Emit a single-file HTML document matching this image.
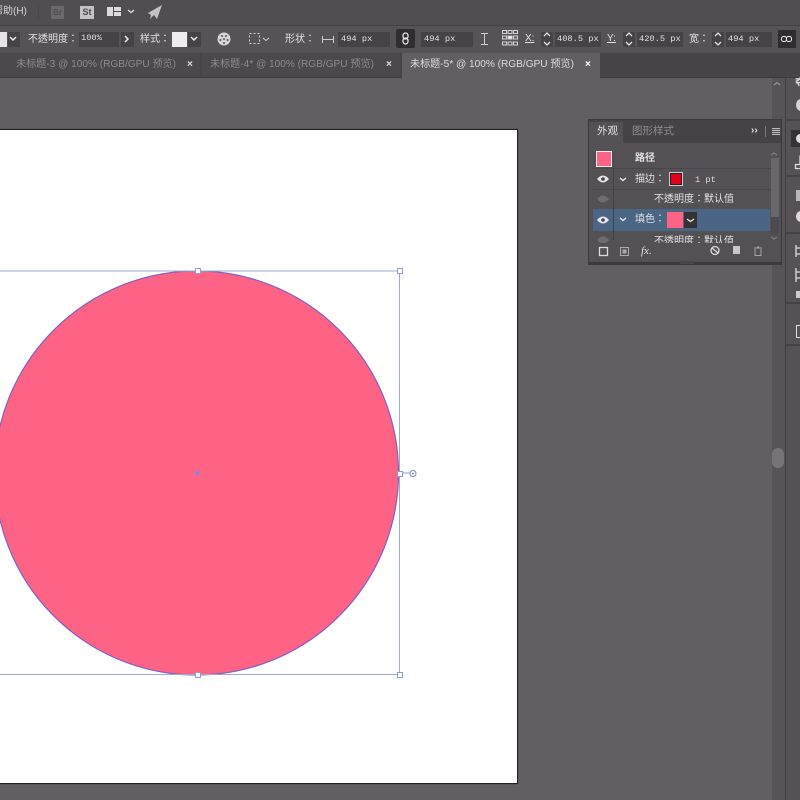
<!DOCTYPE html>
<html><head><meta charset="utf-8"><style>
html,body{margin:0;padding:0}
body{width:800px;height:800px;overflow:hidden;position:relative;background:#625f62;font-family:"Liberation Sans","Noto Sans CJK TC",sans-serif;color:#ddd}
#w{position:absolute;left:0;top:0;width:800px;height:800px;overflow:hidden;background:#625f62;filter:blur(.35px)}
.a{position:absolute}
.t{position:absolute;white-space:nowrap;font-size:10px;line-height:12px;color:#e2e0e2}
.m{font-family:"Liberation Mono","Noto Sans CJK TC",monospace;font-size:8.7px}
.f{position:absolute;background:#464346;height:15px;top:32px}
.s{position:absolute;background:#fff;border:1px solid #8b9fcb;width:4px;height:4px}
svg{position:absolute;overflow:visible}
</style></head><body><div id="w">
<div class="a" style="left:0;top:0;width:800px;height:25px;background:#514e51"></div>
<div class="a" style="left:0;top:25px;width:800px;height:1px;background:#434043"></div>
<div class="a" style="left:0;top:26px;width:800px;height:27px;background:#565356"></div>
<div class="a" style="left:0;top:53px;width:800px;height:24px;background:#474447"></div>
<div class="a" style="left:0;top:77px;width:800px;height:1px;background:#3d3a3d"></div>
<div class="t" style="left:-7px;top:6px;font-size:10px;color:#d8d6d8">帮助(H)</div>
<div class="a" style="left:38px;top:6px;width:1px;height:14px;background:#4a474a"></div>
<div class="a" style="left:51px;top:6px;width:13px;height:13px;background:#6b696b;color:#504d50;font-size:8px;font-weight:bold;line-height:13px;text-align:center">Br</div>
<div class="a" style="left:80px;top:6px;width:14px;height:13px;background:#c4c2c4;color:#4d4a4d;font-size:9px;font-weight:bold;line-height:13px;text-align:center">St</div>
<div class="a" style="left:107px;top:7px;width:6px;height:9px;background:#dcdadc"></div>
<div class="a" style="left:114px;top:7px;width:7px;height:4px;background:#dcdadc"></div>
<div class="a" style="left:114px;top:12px;width:7px;height:4px;background:#dcdadc"></div>
<svg style="left:0;top:0" width="800" height="80" fill="none" stroke="#dcdadc" stroke-width="1.4">
<path d="M128 10l3 2.5 3-2.500"/>
<path d="M148 13L162 5 157 19 154 15 150 19 151 15Z" fill="#c4c2c4" stroke="none"/>
</svg>
<div class="a" style="left:0;top:32px;width:7px;height:15px;background:#e6e4e6"></div>
<div class="a" style="left:8px;top:32px;width:12px;height:15px;background:#474447"></div>
<svg style="left:0;top:0" width="30" height="60" fill="none" stroke="#eee" stroke-width="1.5"><path d="M10 37l3 3 3-3"/></svg>
<div class="t" style="left:28px;top:34px">不透明度：</div>
<div class="f" style="left:79px;width:40px"></div>
<div class="t m" style="left:81px;top:32px">100%</div>
<div class="f" style="left:121px;width:13px"></div>
<svg style="left:0;top:0" width="140" height="60" fill="none" stroke="#eee" stroke-width="1.5"><path d="M125 36l3 3-3 3"/></svg>
<div class="t" style="left:140px;top:34px">样式：</div>
<div class="a" style="left:172px;top:32px;width:15px;height:15px;background:#eeecf0"></div>
<div class="f" style="left:188px;width:13px"></div>
<svg style="left:0;top:0" width="210" height="60" fill="none" stroke="#eee" stroke-width="1.5"><path d="M191 37l3 3 3-3"/></svg>
<svg style="left:217px;top:32px" width="14" height="14"><circle cx="7" cy="7" r="6.500" fill="#d5d3d5"/><circle cx="5" cy="4" r="1" fill="#555"/><circle cx="9" cy="4" r="1" fill="#555"/><circle cx="3.500" cy="8" r="1" fill="#555"/><circle cx="7" cy="7" r="1" fill="#555"/><circle cx="10.500" cy="8" r="1" fill="#555"/><circle cx="7" cy="11" r="1" fill="#555"/></svg>
<svg style="left:249px;top:33px" width="22" height="12" fill="none" stroke="#d5d3d5"><rect x=".5" y=".5" width="10" height="10" stroke-dasharray="2 2"/><path d="M14 5l3 2.500 3-2.500"/></svg>
<div class="t" style="left:285px;top:34px">形状：</div>
<svg style="left:322px;top:36px" width="12" height="7" fill="none" stroke="#ccc"><path d="M.5 0v7M11.500 0v7M1 3.500h10"/></svg>
<div class="f" style="left:338px;width:52px"></div>
<div class="t m" style="left:341px;top:33px">494 px</div>
<div class="a" style="left:396px;top:29px;width:19px;height:19px;background:#2f2d2f;border-radius:2px"></div>
<svg style="left:402px;top:32px" width="8" height="13" fill="none" stroke="#eee" stroke-width="1.200"><rect x="1" y="1" width="5" height="6" rx="2.500"/><rect x="1" y="6" width="5" height="6" rx="2.500"/></svg>
<div class="f" style="left:421px;width:52px"></div>
<div class="t m" style="left:424px;top:33px">494 px</div>
<svg style="left:481px;top:33px" width="7" height="12" fill="none" stroke="#ccc"><path d="M0 .5h7M0 11.500h7M3.500 1v10"/></svg>
<svg style="left:502px;top:30px" width="16" height="16" fill="none" stroke="#d5d3d5"><rect x=".5" y=".5" width="4" height="3"/><rect x="6" y=".5" width="4" height="3"/><rect x="11.500" y=".5" width="4" height="3"/><rect x=".5" y="6" width="4" height="3"/><rect x="6" y="6" width="4" height="3" fill="#eee"/><rect x="11.500" y="6" width="4" height="3"/><rect x=".5" y="12" width="4" height="3"/><rect x="6" y="12" width="4" height="3"/><rect x="11.500" y="12" width="4" height="3"/></svg>
<div class="t" style="left:525px;top:33px;text-decoration:underline">X:</div>
<div class="f" style="left:541px;width:12px"></div>
<div class="f" style="left:555px;width:46px"></div>
<div class="t m" style="left:557px;top:33px">408.5 px</div>
<div class="t" style="left:607px;top:33px;text-decoration:underline">Y:</div>
<div class="f" style="left:623px;width:12px"></div>
<div class="f" style="left:637px;width:46px"></div>
<div class="t m" style="left:639px;top:33px">420.5 px</div>
<div class="t" style="left:689px;top:34px">宽：</div>
<div class="f" style="left:712px;width:12px"></div>
<div class="f" style="left:726px;width:46px"></div>
<div class="t m" style="left:728px;top:33px">494 px</div>
<svg style="left:0;top:0" width="800" height="60" fill="none" stroke="#e4e2e4" stroke-width="1.300"><path d="M544 36l3-3 3 3M544 42l3 3 3-3M626 36l3-3 3 3M626 42l3 3 3-3M715 36l3-3 3 3M715 42l3 3 3-3"/></svg>
<div class="a" style="left:778px;top:30px;width:18px;height:18px;background:#2f2d2f"></div>
<svg style="left:781px;top:36px" width="11" height="6" fill="none" stroke="#eee"><rect x=".5" y=".5" width="5" height="5" rx="2"/><rect x="5.500" y=".5" width="5" height="5" rx="2"/></svg>

<div class="a" style="left:0;top:53px;width:200px;height:24px;background:#4c494c"></div>
<div class="a" style="left:202px;top:53px;width:198px;height:24px;background:#4c494c"></div>
<div class="t" style="left:16px;top:59px;color:#8e8b8e;font-size:10.100px">未标题-3 @ 100% (RGB/GPU 预览)</div>
<div class="t" style="left:187px;top:59px;color:#ddd;font-weight:bold">×</div>
<div class="t" style="left:210px;top:59px;color:#8e8b8e;font-size:10.100px">未标题-4* @ 100% (RGB/GPU 预览)</div>
<div class="t" style="left:386px;top:59px;color:#ddd;font-weight:bold">×</div>
<div class="a" style="left:402px;top:53px;width:198px;height:25px;background:#625f62"></div>
<div class="t" style="left:410px;top:59px;color:#dedcde;font-size:10.100px">未标题-5* @ 100% (RGB/GPU 预览)</div>
<div class="t" style="left:585px;top:59px;color:#fff;font-weight:bold">×</div>

<div class="a" style="left:-2px;top:129px;width:518px;height:653px;background:#fff;border:1px solid #222;box-shadow:0 0 1px #333"></div>
<svg style="left:0;top:0" width="800" height="800">
<circle cx="196.500" cy="473" r="202" fill="#fe6385" stroke="#7e63c2" stroke-width="1.200"/>
<path d="M-2 271H399.500V674.500H-2" fill="none" stroke="#9aadd0" stroke-width="1"/>
<path d="M400 473H410" stroke="#8b9fcb" fill="none"/>
<circle cx="413" cy="473.500" r="3" fill="none" stroke="#7688b0"/><circle cx="413" cy="473.500" r="1" fill="#7688b0"/>
<circle cx="197" cy="473" r="2" fill="#6f8fe0"/>
</svg>
<div class="s" style="left:195px;top:268px"></div>
<div class="s" style="left:397px;top:268px"></div>
<div class="s" style="left:397px;top:471px"></div>
<div class="s" style="left:195px;top:672px"></div>
<div class="s" style="left:397px;top:672px"></div>

<div class="a" style="left:772px;top:78px;width:13px;height:722px;background:#575457"></div>
<svg style="left:0;top:0" width="800" height="100" fill="none"><path d="M774 85l3-2.500 3 2.500" stroke="#a5a3a5"/></svg>
<div class="a" style="left:772px;top:448px;width:12px;height:20px;background:#777477;border-radius:6px"></div>
<div class="a" style="left:785px;top:78px;width:15px;height:722px;background:#555255"></div>
<div class="a" style="left:785px;top:78px;width:1px;height:722px;background:#413e41"></div>
<div class="a" style="left:786px;top:119px;width:14px;height:2px;background:#454245"></div>
<div class="a" style="left:786px;top:175px;width:14px;height:2px;background:#454245"></div>
<div class="a" style="left:786px;top:232px;width:14px;height:2px;background:#454245"></div>
<div class="a" style="left:786px;top:302px;width:14px;height:2px;background:#454245"></div>
<div class="a" style="left:786px;top:344px;width:14px;height:2px;background:#454245"></div>
<div class="t" style="left:795px;top:77px;font-weight:bold;font-size:11px">夺</div>
<div class="a" style="left:796px;top:99px;width:10px;height:12px;background:#d5d3d5;border-radius:50%"></div>
<div class="a" style="left:791px;top:130px;width:9px;height:17px;background:#353235"></div>
<div class="a" style="left:796px;top:134px;width:8px;height:9px;background:#ddd;border-radius:50%"></div>
<svg style="left:795px;top:155px" width="10" height="15" fill="none" stroke="#ddd" stroke-width="1.300"><path d="M5 .5v9M.5 9.500h9v4h-9z"/></svg>
<div class="a" style="left:796px;top:190px;width:6px;height:11px;background:#b8b6b8"></div>
<div class="a" style="left:796px;top:211px;width:10px;height:11px;background:#ddd;border-radius:50%"></div>
<svg style="left:795px;top:244px" width="8" height="54" fill="none" stroke="#ddd" stroke-width="1.300"><path d="M1 1v12M1 4h6M1 10h6M1 24v14M1 28h6M1 34h6"/><rect x="1" y="47" width="6" height="7" fill="#ccc" stroke="none"/></svg>
<div class="a" style="left:796px;top:325px;width:4px;height:11px;border:1px solid #ddd;border-right:0"></div>

<div class="a" style="left:588px;top:119px;width:194px;height:146px;background:#545154;border:1px solid #3c393c;box-sizing:border-box"></div>
<div class="a" style="left:589px;top:120px;width:192px;height:23px;background:#464346"></div>
<div class="a" style="left:589px;top:122px;width:34px;height:21px;background:#545154"></div>
<div class="t" style="left:597px;top:125px;font-size:10.500px">外观</div>
<div class="t" style="left:632px;top:125px;color:#8f8c8f;font-size:10.500px">图形样式</div>
<div class="t" style="left:751px;top:125px;font-weight:bold;font-size:10px">››</div>
<div class="a" style="left:765px;top:126px;width:1px;height:11px;background:#777"></div>
<div class="a" style="left:772px;top:128px;width:8px;height:7px;background:repeating-linear-gradient(#bbb 0,#bbb 1px,#555 1px,#555 2px)"></div>
<div class="a" style="left:596px;top:151px;width:14px;height:14px;background:#fe6385;border:1px solid #eee"></div>
<div class="t" style="left:635px;top:153px;font-size:10px;font-weight:bold">路径</div>
<div class="a" style="left:593px;top:168px;width:178px;height:1px;background:#4a474a"></div>
<div class="a" style="left:593px;top:189px;width:178px;height:1px;background:#4a474a"></div>
<div class="a" style="left:593px;top:209px;width:178px;height:1px;background:#4a474a"></div>
<div class="a" style="left:593px;top:209px;width:177px;height:22px;background:#4b6684"></div>
<div class="a" style="left:613px;top:168px;width:1px;height:72px;background:#444144"></div>
<svg style="left:0;top:0" width="800" height="260" fill="none">
<path d="M597 179q6-7 12 0q-6 7-12 0z" fill="#e4e2e4"/><circle cx="603" cy="179" r="1.800" fill="#444"/>
<path d="M597 199q6-7 12 0q-6 7-12 0z" fill="#6f6c6f"/>
<path d="M597 220q6-7 12 0q-6 7-12 0z" fill="#e8e8ee"/><circle cx="603" cy="220" r="1.800" fill="#446"/>
<path d="M597 240q6-7 12 0q-6 7-12 0z" fill="#6f6c6f"/>
<path d="M620 178l3 2.500 3-2.500M620 218l3 2.500 3-2.500" stroke="#eee" stroke-width="1.300"/>
</svg>
<div class="t" style="left:635px;top:174px">描边：</div>
<div class="a" style="left:670px;top:173px;width:10px;height:10px;background:#e3001b;border:1px solid #222;outline:1px solid #ccc"></div>
<div class="t m" style="left:695px;top:174px">1 pt</div>
<div class="t" style="left:654px;top:194px">不透明度：默认值</div>
<div class="t" style="left:635px;top:214px">填色：</div>
<div class="a" style="left:667px;top:212px;width:16px;height:16px;background:#fe6385"></div>
<div class="a" style="left:684px;top:212px;width:13px;height:16px;background:#353235"></div>
<svg style="left:0;top:0" width="800" height="260" fill="none"><path d="M687 219l3.500 2.500 3.500-2.500" stroke="#eee" stroke-width="1.300"/></svg>
<div class="a" style="left:593px;top:231px;width:178px;height:12px;overflow:hidden"><div class="t" style="left:61px;top:5px">不透明度：默认值</div></div>
<div class="a" style="left:771px;top:158px;width:8px;height:76px;background:#4d4a4d"></div>
<div class="a" style="left:771px;top:158px;width:8px;height:59px;background:#6a676a"></div>
<svg style="left:0;top:0" width="800" height="260" fill="none"><path d="M771 155l3-2 3 2M771 237l3 2 3-2" stroke="#8a878a"/></svg>
<div class="a" style="left:589px;top:243px;width:192px;height:20px;background:#545154"></div>
<div class="a" style="left:589px;top:262px;width:192px;height:2px;background:#3c393c"></div>
<div class="a" style="left:680px;top:261px;width:14px;height:3px;background:#4a474a"></div>
<svg style="left:0;top:0" width="800" height="270" fill="none" stroke="#dcdadc">
<rect x="599.500" y="247.500" width="8" height="8" stroke-width="1.300"/>
<rect x="620.500" y="247.500" width="8" height="8" stroke="#aaa"/><rect x="622.500" y="249.500" width="4" height="4" fill="#aaa" stroke="none"/>
<circle cx="715" cy="250.500" r="4" stroke-width="1.300"/><path d="M712 248l6 5" stroke-width="1.300"/>
<rect x="733" y="246" width="7" height="8" fill="#c8c6c8" stroke="none"/>
<path d="M754 248h8M755 249v6.500h6V249M757 247h2" stroke="#a5a3a5"/>
</svg>
<div class="t" style="left:641px;top:245px;font-family:'Liberation Serif',serif;font-style:italic;font-size:11px">fx.</div>
</div></body></html>
